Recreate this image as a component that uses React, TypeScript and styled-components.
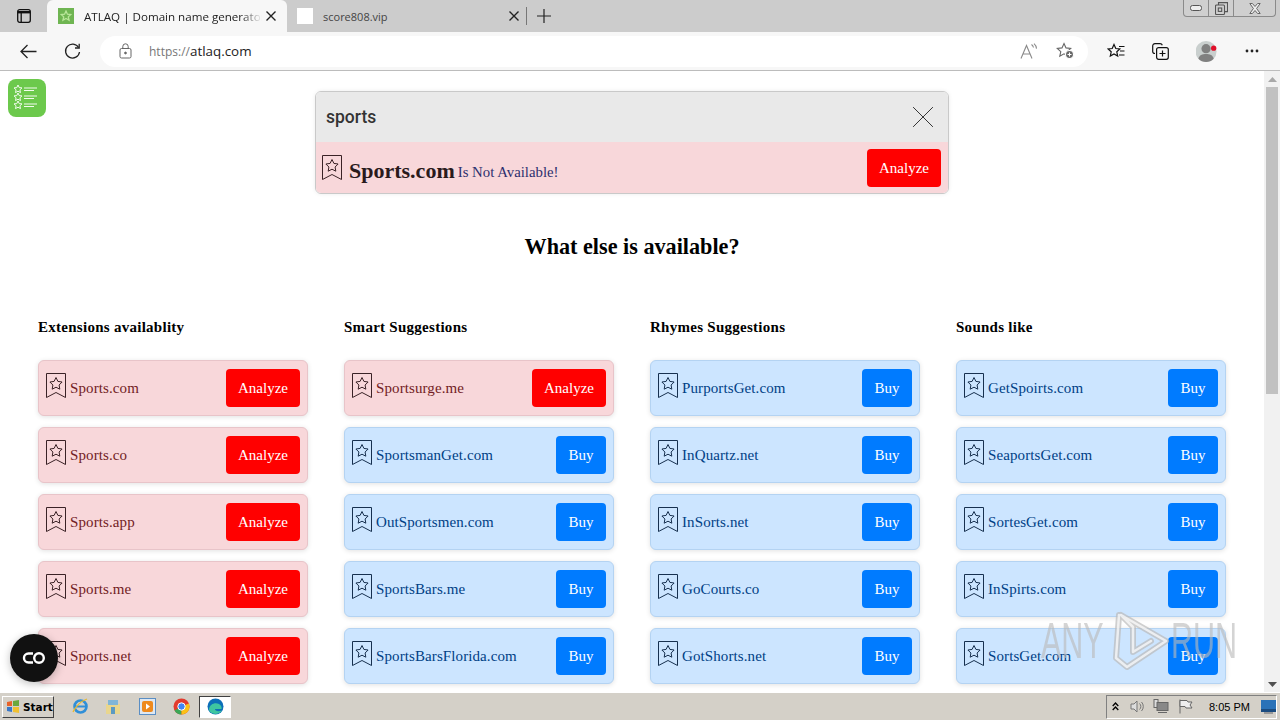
import React from "react";
import styled, { createGlobalStyle } from "styled-components";

const Global = createGlobalStyle`
  html, body { margin: 0; padding: 0; height: 100%; overflow: hidden; background: #fff; }
  #root { height: 720px; }
  * { box-sizing: border-box; }
`;

const Screen = styled.div`
  position: relative;
  width: 1280px;
  height: 720px;
  display: flex;
  flex-direction: column;
  overflow: hidden;
  font-family: "Liberation Serif", serif;
`;

/* ---------- browser chrome ---------- */
const TabStrip = styled.div`
  height: 32px;
  flex: none;
  background: #cccccc;
  display: flex;
  align-items: flex-end;
  font-family: "Open Sans", "Noto Sans", sans-serif;
  position: relative;
`;
const WinSquare = styled.div`
  width: 47px;
  height: 32px;
  flex: none;
  display: flex;
  align-items: center;
  justify-content: center;
`;
const Tab = styled.div<{ $active?: boolean }>`
  width: ${p => (p.$active ? "240px" : "238px")};
  height: 32px;
  flex: none;
  display: flex;
  align-items: center;
  padding-left: ${p => (p.$active ? "11px" : "10px")};
  background: ${p => (p.$active ? "#f7f7f7" : "transparent")};
  border-radius: 6px 6px 0 0;
`;
const TabTitle = styled.span<{ $dim?: boolean }>`
  font-size: ${p => (p.$dim ? "11px" : "11.6px")};
  color: ${p => (p.$dim ? "#444" : "#222")};
  margin-left: 10px;
  width: ${p => (p.$dim ? "182px" : "178px")};
  white-space: nowrap;
  overflow: hidden;
  -webkit-mask-image: ${p => (p.$dim ? "none" : "linear-gradient(90deg,#000 88%,transparent)")};
`;
const Favicon = styled.div<{ $blank?: boolean }>`
  width: 16px;
  height: 16px;
  flex: none;
  background: ${p => (p.$blank ? "#fff" : "#6fb552")};
  display: flex;
  align-items: center;
  justify-content: center;
`;
const TabClose = styled.div`
  width: 10px;
  height: 10px;
  flex: none;
  margin-left: 4px;
  display: flex;
`;
const TabDivider = styled.div`
  width: 1px;
  height: 18px;
  background: #777;
  align-self: center;
  margin-left: 1px;
`;
const NewTab = styled.div`
  width: 34px;
  height: 32px;
  display: flex;
  align-items: center;
  justify-content: center;
`;
const WinControls = styled.div`
  position: absolute;
  top: 0;
  right: 4px;
  width: 93px;
  height: 17px;
  display: flex;
  border: 1px solid #8a8a8a;
  border-top: none;
  border-radius: 0 0 4px 4px;
  background: #cfcfcf;
`;
const WinBtn = styled.div<{ $w: number; $last?: boolean }>`
  width: ${p => p.$w}px;
  flex: none;
  display: flex;
  align-items: center;
  justify-content: center;
  border-right: ${p => (p.$last ? "none" : "1px solid #8a8a8a")};
`;
const Toolbar = styled.div`
  height: 39px;
  flex: none;
  background: #f7f7f7;
  border-bottom: 1px solid #bcbcbc;
  display: flex;
  align-items: center;
  padding-left: 17px;
`;
const NavBtn = styled.div<{ $gap?: number }>`
  width: 22px;
  height: 22px;
  flex: none;
  margin-right: ${p => p.$gap ?? 0}px;
  display: flex;
  align-items: center;
  justify-content: center;
`;
const AddressBar = styled.div`
  width: 988px;
  height: 31px;
  flex: none;
  margin-left: 1px;
  background: #fff;
  border-radius: 16px;
  display: flex;
  align-items: center;
  padding-left: 19px;
  margin-right: 17px;
  font-family: "Open Sans", "Noto Sans", sans-serif;
`;
const Proto = styled.span`
  color: #777;
  margin-left: 17px;
  font-size: 12px;
`;
const Host = styled.span`
  color: #222;
  font-size: 13.4px;
`;
const AddrSpacer = styled.div`
  flex: 1;
`;

/* ---------- page ---------- */
const Viewport = styled.div`
  flex: 1;
  min-height: 0;
  display: flex;
  background: #fff;
`;
const Page = styled.div`
  flex: 1;
  min-width: 0;
  overflow: hidden;
  padding: 20px 0 0 38px;
`;
const SearchBox = styled.div`
  width: 634px;
  margin-left: 277px;
  border: 1px solid #c9c9c9;
  border-radius: 6px;
  overflow: hidden;
  box-shadow: 0 0 4px rgba(0, 0, 0, 0.08);
`;
const SearchInput = styled.div`
  height: 50px;
  background: #e9e9e9;
  display: flex;
  align-items: center;
  justify-content: space-between;
  padding: 0 14px 0 10px;
  font-family: "Roboto", "Liberation Sans", sans-serif;
  font-size: 17.5px;
  font-weight: 500;
  color: #333;
`;
const ResultRow = styled.div`
  height: 51px;
  background: #f8d7da;
  display: flex;
  align-items: center;
  padding: 0 7px 0 6px;
  color: #721c24;
`;
const ResultName = styled.span`
  font-size: 22px;
  font-weight: bold;
  color: #2a1a1c;
  margin-left: 7px;
  position: relative;
  top: 3px;
`;
const ResultNote = styled.span`
  font-size: 14.8px;
  color: #2d2f6e;
  margin-left: 3px;
  flex: 1;
  position: relative;
  top: 5px;
`;
const Heading = styled.h2`
  margin: 40px 0 0 0;
  width: 1188px;
  text-align: center;
  font-size: 22.2px;
  line-height: 26px;
  font-weight: bold;
  color: #000;
`;
const Columns = styled.div`
  margin-top: 57px;
  display: grid;
  grid-template-columns: repeat(4, 270px);
  column-gap: 36px;
`;
const ColTitle = styled.h3`
  margin: 0 0 23px 0;
  font-size: 15px;
  letter-spacing: 0.27px;
  line-height: 20px;
  font-weight: bold;
  color: #000;
`;
const Item = styled.div<{ $taken: boolean }>`
  height: 56px;
  margin-bottom: 11px;
  display: flex;
  align-items: center;
  padding: 0 7px 0 7px;
  border-radius: 6px;
  border: 1px solid ${p => (p.$taken ? "#e8c4c9" : "#b4d3f2")};
  background: ${p => (p.$taken ? "#f8d7da" : "#cce5ff")};
  color: ${p => (p.$taken ? "#721c24" : "#004085")};
  box-shadow: 0 1px 5px rgba(0, 0, 0, 0.12);
`;
const ItemName = styled.span`
  flex: 1;
  font-size: 15px;
  letter-spacing: 0.1px;
  margin-left: 4px;
  white-space: nowrap;
`;
const ActionBtn = styled.div<{ $taken: boolean }>`
  width: ${p => (p.$taken ? "74px" : "50px")};
  height: 38px;
  flex: none;
  border-radius: 4px;
  background: ${p => (p.$taken ? "#ff0000" : "#007bff")};
  color: #fff;
  font-size: 15px;
  display: flex;
  align-items: center;
  justify-content: center;
`;
const ResultBtn = styled(ActionBtn)`
  padding-top: 1px;
`;
const Scrollbar = styled.div`
  width: 16px;
  flex: none;
  background: #f1f1f1;
  display: flex;
  flex-direction: column;
  align-items: center;
`;
const ScrollUp = styled.div`
  height: 16px;
  width: 100%;
  flex: none;
  display: flex;
  align-items: center;
  justify-content: center;
`;
const ScrollThumb = styled.div`
  width: 12px;
  height: 307px;
  background: #c1c1c1;
`;
const ScrollFill = styled.div`
  flex: 1;
`;

/* ---------- taskbar ---------- */
const Taskbar = styled.div`
  height: 28px;
  flex: none;
  background: #d4d0c8;
  border-top: 1px solid #fff;
  display: flex;
  align-items: center;
  padding-left: 2px;
`;
const StartBtn = styled.div`
  width: 52px;
  height: 22px;
  flex: none;
  display: flex;
  align-items: center;
  gap: 3px;
  padding-left: 3px;
  background: #d4d0c8;
  border: 1px solid;
  border-color: #fff #404040 #404040 #fff;
  font-family: "DejaVu Sans", sans-serif;
  font-weight: bold;
  font-size: 10.5px;
  color: #000;
`;
const TaskIcon = styled.div<{ $on?: boolean; $ml?: number }>`
  width: ${p => (p.$on ? "32px" : "20px")};
  height: 22px;
  flex: none;
  margin-left: ${p => p.$ml ?? 0}px;
  display: flex;
  align-items: center;
  justify-content: center;
  background: ${p => (p.$on ? "#fff" : "transparent")};
  border: ${p => (p.$on ? "1px solid" : "none")};
  border-color: #404040 #fff #fff #404040;
`;
const Tray = styled.div`
  margin-left: auto;
  width: 171px;
  height: 24px;
  flex: none;
  margin-right: 3px;
  border: 1px solid;
  border-color: #808080 #fff #fff #808080;
  display: flex;
  align-items: center;
  padding-left: 2px;
  font-family: "Liberation Sans", sans-serif;
  font-size: 11px;
  color: #000;
`;
const TrayIcon = styled.div<{ $w: number }>`
  width: ${p => p.$w}px;
  flex: none;
  display: flex;
  justify-content: center;
`;
const Clock = styled.span`
  margin-left: 8px;
  width: 52px;
  white-space: nowrap;
`;

/* ---------- overlays ---------- */
const AppLogo = styled.div`
  position: absolute;
  left: 8px;
  top: 79px;
  width: 38px;
  height: 38px;
  border-radius: 8px;
  background: #6cc94c;
  display: flex;
`;
const ChatBubble = styled.div`
  position: absolute;
  left: 10px;
  top: 634px;
  width: 48px;
  height: 48px;
  border-radius: 50%;
  background: #111;
  box-shadow: 0 2px 8px rgba(0, 0, 0, 0.25);
  display: flex;
  align-items: center;
  justify-content: center;
`;
const Watermark = styled.div`
  position: absolute;
  left: 1041px;
  top: 610px;
  height: 62px;
  display: flex;
  align-items: center;
  pointer-events: none;
`;
const WatermarkText = styled.span<{ $w: number }>`
  display: block;
  width: ${p => p.$w}px;
  font-family: "Liberation Sans", sans-serif;
  font-size: 50px;
  line-height: 50px;
  color: rgba(186, 186, 186, 0.62);
  white-space: nowrap;
  transform: scaleX(0.61);
  transform-origin: left center;
`;

/* ---------- icons ---------- */
const Bookmark = ({ c, top = -3 }: { c: string; top?: number }) => (
  <svg width={20} height={25} viewBox="0 0 20 25" fill="none" stroke={c} strokeWidth="1" style={{ flex: "none", position: "relative", top }}>
    <path d="M.5.5h19v24L10 19.500.5 24.500z" />
    <path d="M10 4.500l1.900 3.900 4.200.6-3 3 .7 4.200-3.800-2-3.800 2 .7-4.200-3-3 4.200-.6z" />
  </svg>
);
const X = ({ s = 10, c = "#222", w = 1.4 }: { s?: number; c?: string; w?: number }) => (
  <svg width={s} height={s} viewBox="0 0 10 10" stroke={c} strokeWidth={w} fill="none">
    <path d="M.5.5l9 9M9.500.5l-9 9" />
  </svg>
);
const ListLogo = () => (
  <svg width={38} height={38} viewBox="0 0 38 38" fill="none" stroke="#f2fbee" strokeWidth="1">
    {[10, 18, 26].map(y => (
      <g key={y}>
        <path d={`M10 ${y - 4}l1.200 2.600 2.800.3-2.100 1.900.6 2.800-2.500-1.400-2.500 1.400.6-2.800-2.100-1.900 2.800-.3z`} />
        <path d={`M16 ${y - 1}h13M16 ${y + 1.5}h10`} />
      </g>
    ))}
  </svg>
);

const data: { title: string; items: [string, boolean][] }[] = [
  { title: "Extensions availablity", items: [["Sports.com", true], ["Sports.co", true], ["Sports.app", true], ["Sports.me", true], ["Sports.net", true]] },
  { title: "Smart Suggestions", items: [["Sportsurge.me", true], ["SportsmanGet.com", false], ["OutSportsmen.com", false], ["SportsBars.me", false], ["SportsBarsFlorida.com", false]] },
  { title: "Rhymes Suggestions", items: [["PurportsGet.com", false], ["InQuartz.net", false], ["InSorts.net", false], ["GoCourts.co", false], ["GotShorts.net", false]] },
  { title: "Sounds like", items: [["GetSpoirts.com", false], ["SeaportsGet.com", false], ["SortesGet.com", false], ["InSpirts.com", false], ["SortsGet.com", false]] },
];

export default function App() {
  return (
    <Screen>
      <Global />
      <TabStrip>
        <WinSquare>
          <svg width="14" height="14" viewBox="0 0 14 14" fill="none" stroke="#111" strokeWidth="1.300">
            <rect x=".7" y=".7" width="12.600" height="12.600" rx="2" />
            <path d="M.7 3.200h12.600" strokeWidth="2.400" />
            <path d="M4.200 3.500v9.800" />
          </svg>
        </WinSquare>
        <Tab $active>
          <Favicon>
            <svg width="12" height="12" viewBox="0 0 11 11" fill="none" stroke="#b9e69a" strokeWidth="1.200">
              <path d="M5.500 1l1.300 2.900 3.100.3-2.300 2.100.7 3.100-2.800-1.600-2.800 1.600.7-3.100L1.100 4.200l3.100-.3z" />
            </svg>
          </Favicon>
          <TabTitle>ATLAQ | Domain name generator</TabTitle>
          <TabClose><X /></TabClose>
        </Tab>
        <Tab>
          <Favicon $blank />
          <TabTitle $dim>score808.vip</TabTitle>
          <TabClose><X /></TabClose>
        </Tab>
        <TabDivider />
        <NewTab>
          <svg width="14" height="14" viewBox="0 0 14 14" stroke="#222" strokeWidth="1.200"><path d="M7 0v14M0 7h14" /></svg>
        </NewTab>
        <WinControls>
          <WinBtn $w={25}><svg width="12" height="6" viewBox="0 0 12 6" fill="#eee" stroke="#555"><rect x=".5" y=".5" width="11" height="5" rx="2" /></svg></WinBtn>
          <WinBtn $w={25}><svg width="13" height="13" viewBox="0 0 13 13" fill="none" stroke="#555" strokeWidth="1.100"><rect x=".5" y="3" width="9" height="9.500" rx="1" /><path d="M3.500 3V.6h9v9H9.500" /><rect x="3.300" y="6" width="3.400" height="3.400" /></svg></WinBtn>
          <WinBtn $w={41} $last><svg width="12" height="11" viewBox="0 0 12 11" fill="#eee" stroke="#666"><path d="M.8.500h2.600L6 3.500 8.600.500h2.600L7.600 5.500l3.600 5H8.600L6 7.500l-2.600 3H.8l3.600-5z" /></svg></WinBtn>
        </WinControls>
      </TabStrip>
      <Toolbar>
        <NavBtn $gap={22}>
          <svg width="17" height="15" viewBox="0 0 17 15" fill="none" stroke="#222" strokeWidth="1.300"><path d="M16.500 7.500H1M7.500 1L1 7.500 7.500 14" /></svg>
        </NavBtn>
        <NavBtn $gap={16}>
          <svg width="17" height="17" viewBox="0 0 17 17" fill="none" stroke="#222" strokeWidth="1.300"><path d="M14.600 4.500A7 7 0 1 0 15.500 9" /><path d="M15.200 .8v4.200H11" /></svg>
        </NavBtn>
        <AddressBar>
          <svg width="13" height="16" viewBox="0 0 13 16" fill="none" stroke="#666" strokeWidth="1"><rect x="1" y="5.500" width="11" height="9.500" rx="1.500" /><path d="M3.800 5.500V3.500a2.700 2.700 0 0 1 5.400 0v2" /><circle cx="6.500" cy="10" r=".9" fill="#666" /></svg>
          <Proto>https://</Proto><Host>atlaq.com</Host>
          <AddrSpacer />
          <NavBtn $gap={14}>
            <svg width="18" height="17" viewBox="0 0 18 17" fill="none" stroke="#8a8a8a" strokeWidth="1.100"><path d="M1 15.500L6.500 2.500 12 15.500M3 11h7" /><path d="M11.500 1.500a5 5 0 0 1 2 3M14 .6a7 7 0 0 1 2.500 5" /></svg>
          </NavBtn>
          <NavBtn $gap={12}>
            <svg width="19" height="18" viewBox="0 0 19 18" fill="none" stroke="#666" strokeWidth="1.100"><path d="M8 1.500l2 4.400 4.700.5-3.500 3.200 1 4.600L8 11.800l-4.200 2.400 1-4.600L1.300 6.400 6 5.900z" /><circle cx="13.500" cy="12.500" r="4" fill="#666" stroke="#fff" /><path d="M13.500 10.500v4M11.500 12.500h4" stroke="#fff" /></svg>
          </NavBtn>
        </AddressBar>
        <NavBtn $gap={22}>
          <svg width="18" height="17" viewBox="0 0 18 17" fill="none" stroke="#111" strokeWidth="1.200"><path d="M7 1.500l1.800 4 4 .5-3 2.800.9 4.200L7 10.900 3.300 13l.9-4.200-3-2.800 4-.5zM12 3.500h5.500M13 8h4.500M12 12h5.500" /></svg>
        </NavBtn>
        <NavBtn $gap={25}>
          <svg width="17" height="17" viewBox="0 0 17 17" fill="none" stroke="#111" strokeWidth="1.200"><path d="M3 10.500c-1.500 0-2.300-.8-2.300-2V3c0-1.300.8-2.300 2.300-2.300h5c1.300 0 2 .6 2.300 1.500" /><rect x="4.600" y="4.600" width="11.700" height="11.700" rx="2" /><path d="M10.500 7.500v6M7.500 10.500h6" /></svg>
        </NavBtn>
        <NavBtn $gap={23}>
          <svg width="23" height="23" viewBox="0 0 23 23"><circle cx="10.500" cy="11.500" r="11" fill="#c9cfce" /><circle cx="10.500" cy="8.500" r="4.800" fill="#808080" /><path d="M2.500 19c1-4 4-5 8-5s7 1 8 5a11 11 0 0 1-16 0z" fill="#808080" /><circle cx="18.500" cy="8" r="2.800" fill="#e0102a" /></svg>
        </NavBtn>
        <NavBtn>
          <svg width="14" height="4" viewBox="0 0 14 4" fill="#222"><circle cx="2" cy="2" r="1.400" /><circle cx="7" cy="2" r="1.400" /><circle cx="12" cy="2" r="1.400" /></svg>
        </NavBtn>
      </Toolbar>
      <Viewport>
        <Page>
          <SearchBox>
            <SearchInput>
              sports
              <X s={22} c="#333" w={0.45} />
            </SearchInput>
            <ResultRow>
              <Bookmark c="#3a2226" top={0} />
              <ResultName>Sports.com</ResultName>
              <ResultNote>Is Not Available!</ResultNote>
              <ResultBtn $taken>Analyze</ResultBtn>
            </ResultRow>
          </SearchBox>
          <Heading>What else is available?</Heading>
          <Columns>
            {data.map(col => (
              <div key={col.title}>
                <ColTitle>{col.title}</ColTitle>
                {col.items.map(([name, taken]) => (
                  <Item key={name} $taken={taken}>
                    <Bookmark c={taken ? "#3a2226" : "#17304f"} />
                    <ItemName>{name}</ItemName>
                    <ActionBtn $taken={taken}>{taken ? "Analyze" : "Buy"}</ActionBtn>
                  </Item>
                ))}
              </div>
            ))}
          </Columns>
        </Page>
        <Scrollbar>
          <ScrollUp><svg width="9" height="5" viewBox="0 0 9 5" fill="#a8a8a8"><path d="M4.500 0L9 5H0z" /></svg></ScrollUp>
          <ScrollThumb />
          <ScrollFill />
          <ScrollUp><svg width="9" height="5" viewBox="0 0 9 5" fill="#505050"><path d="M0 0h9L4.500 5z" /></svg></ScrollUp>
        </Scrollbar>
      </Viewport>
      <Taskbar>
        <StartBtn>
          <svg width="14" height="13" viewBox="0 0 14 13"><path d="M1 2l5-1v5H1z" fill="#e8632a" /><path d="M7 1l6-1v6H7z" fill="#6aa83c" /><path d="M1 7h5v5l-5-1z" fill="#3a78c8" /><path d="M7 7h6v6l-6-1z" fill="#f0c030" /></svg>
          Start
        </StartBtn>
        <TaskIcon $ml={16}>
          <svg width="17" height="17" viewBox="0 0 17 17" fill="none"><circle cx="8.500" cy="8.500" r="6" stroke="#2f8fd8" strokeWidth="2.600" /><path d="M3 8.500h11" stroke="#2f8fd8" strokeWidth="2" /><path d="M1 14C3 9 9 3 15 1" stroke="#e8b830" strokeWidth="1.300" /></svg>
        </TaskIcon>
        <TaskIcon $ml={13}>
          <svg width="16" height="16" viewBox="0 0 16 16"><path d="M1 5h14v10H1z" fill="#e9d68e" /><path d="M3 1h10v5H3z" fill="#7fb6d8" /><rect x="6" y="8" width="4" height="7" fill="#5b9ac2" /></svg>
        </TaskIcon>
        <TaskIcon $ml={14}>
          <svg width="17" height="17" viewBox="0 0 17 17"><rect x=".5" y=".5" width="16" height="16" fill="#dfe8f2" stroke="#5a8ec4" /><rect x="3" y="3" width="11" height="11" rx="2" fill="#ee8a1e" /><path d="M7 5.500l4 3-4 3z" fill="#fff" /></svg>
        </TaskIcon>
        <TaskIcon $ml={14}>
          <svg width="17" height="17" viewBox="0 0 17 17"><circle cx="8.500" cy="8.500" r="8" fill="#e33b2e" /><path d="M8.500 8.500L1.500 12.500A8 8 0 0 0 8.500 16.500z" fill="#3aa757" /><path d="M8.500 8.500v8a8 8 0 0 0 7.500-11z" fill="#fbc116" /><circle cx="8.500" cy="8.500" r="3.700" fill="#4285f4" stroke="#fff" /></svg>
        </TaskIcon>
        <TaskIcon $on $ml={8}>
          <svg width="17" height="17" viewBox="0 0 17 17"><circle cx="8.500" cy="8.500" r="8" fill="#0c6fb8" /><path d="M2 11C3 6 8 4 12 6c2 1 3 3 2.500 5H8c0 2 3 3 7 1.500-2 3-6 4-9 3C3.500 14.500 2 13 2 11z" fill="#3ec6a0" /></svg>
        </TaskIcon>
        <Tray>
          <TrayIcon $w={12}><svg width="7" height="9" viewBox="0 0 7 9" fill="none" stroke="#000" strokeWidth="1.300"><path d="M.7 4L3.500 1l2.800 3M.7 8l2.800-3 2.800 3" /></svg></TrayIcon>
          <TrayIcon $w={32}><svg width="15" height="15" viewBox="0 0 15 15" fill="#ddd" stroke="#777"><path d="M1 5h3l3-3v11l-3-3H1z" /><path d="M9.500 4.500a4 4 0 0 1 0 6M11.500 3a6.500 6.500 0 0 1 0 9" fill="none" /></svg></TrayIcon>
          <TrayIcon $w={16}><svg width="16" height="15" viewBox="0 0 16 15" fill="#ddd" stroke="#666"><rect x="1" y=".5" width="4" height="8" /><rect x="4" y="3.500" width="11" height="8" fill="#888" /><path d="M5 13.500h9" /></svg></TrayIcon>
          <TrayIcon $w={32}><svg width="15" height="15" viewBox="0 0 15 15" fill="#eee" stroke="#666"><path d="M2 .5v14" /><path d="M2 1.500h7l1 1.500h4l-2 3 2 3H8L7 7.500H2z" /></svg></TrayIcon>
          <Clock>8:05 PM</Clock>
          <svg width="15" height="14" viewBox="0 0 15 14"><rect width="15" height="12" fill="#2a72b8" /><rect y="9" width="15" height="3" fill="#1b4c80" /><rect x="3" y="12" width="9" height="2" fill="#999" /></svg>
        </Tray>
      </Taskbar>
      <AppLogo><ListLogo /></AppLogo>
      <ChatBubble>
        <svg width="26" height="14" viewBox="0 0 26 14" fill="none" stroke="#fff" strokeWidth="2.400"><path d="M12 2.500H7.500a4.500 4.500 0 0 0 0 9H12" /><circle cx="18" cy="7" r="4.800" /></svg>
      </ChatBubble>
      <Watermark>
        <WatermarkText $w={70}>ANY</WatermarkText>
        <svg width="60" height="62" viewBox="0 0 60 62" fill="none" strokeLinejoin="round" strokeLinecap="round">
          <path d="M8 5L5 48 16 57 55 31 10 5 22 17 22 42 40 31" stroke="rgba(186,186,186,.7)" strokeWidth="6" />
          <path d="M8 5L5 48 16 57 55 31 10 5 22 17 22 42 40 31" stroke="rgba(255,255,255,.7)" strokeWidth="2.500" />
        </svg>
        <WatermarkText $w={60}>RUN</WatermarkText>
      </Watermark>
    </Screen>
  );
}
